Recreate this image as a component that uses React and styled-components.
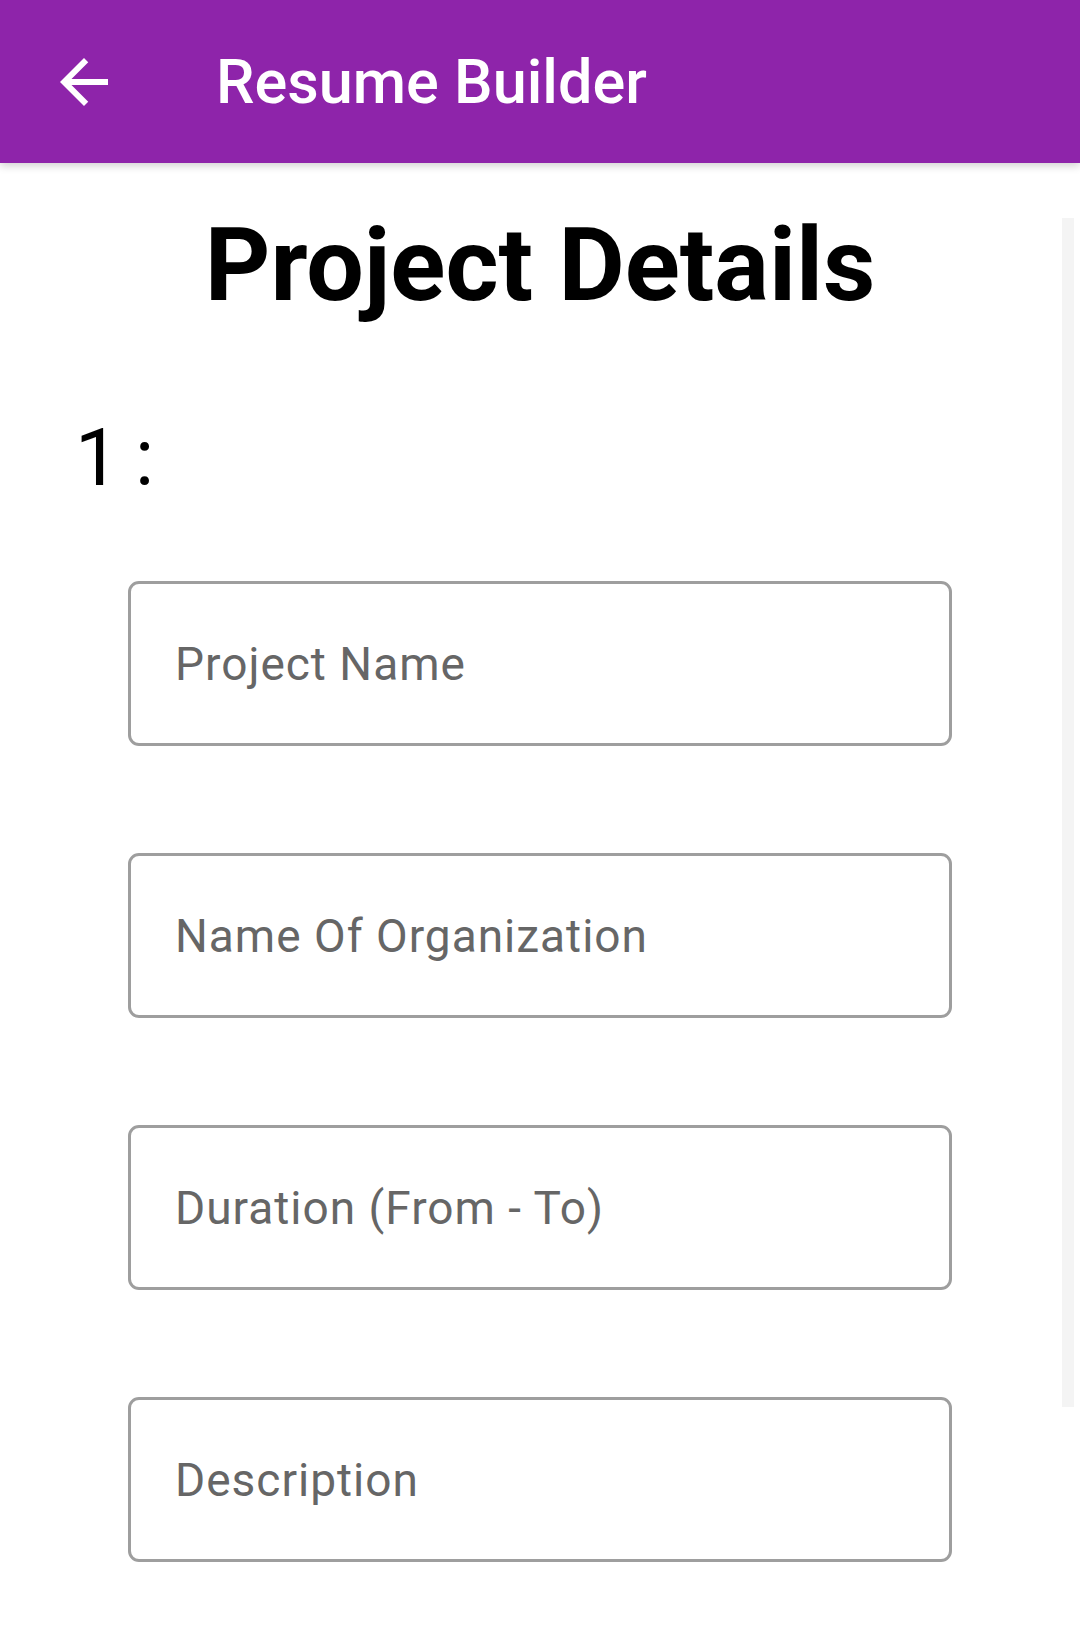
import React from "react";
import styled, { createGlobalStyle } from "styled-components";

const Global = createGlobalStyle`
  html, body { margin: 0; padding: 0; background: #ffffff; }
  body { font-family: Roboto, "Noto Sans", Arial, sans-serif; }
  * { box-sizing: border-box; }
`;

const Page = styled.div`
  width: 1080px;
  min-height: 1629px;
  background: #ffffff;
  overflow: hidden;
`;

const AppBar = styled.header`
  position: relative;
  z-index: 2;
  height: 163px;
  background: #8e24aa;
  display: flex;
  align-items: center;
  padding-left: 48px;
  box-shadow: 0 3px 8px rgba(0, 0, 0, 0.18);
`;

const BackButton = styled.div`
  width: 72px;
  height: 72px;
  display: flex;
  align-items: center;
  justify-content: center;
  color: #ffffff;
`;

const AppTitle = styled.h1`
  margin: 0 0 0 96px;
  font-family: Roboto, sans-serif;
  font-weight: 500;
  font-size: 61.2px;
  color: #ffffff;
  line-height: normal;
`;

const Content = styled.main`
  position: relative;
  display: flex;
  flex-direction: column;
  padding-top: 42px;
`;

const ScrollTrack = styled.div`
  position: absolute;
  left: 1062px;
  top: 55px;
  width: 12px;
  height: 1189px;
  background: #f4f4f4;
`;

const Heading = styled.h2`
  margin: 0;
  text-align: center;
  font-family: Roboto, sans-serif;
  font-weight: 700;
  font-size: 102px;
  line-height: normal;
  color: #000000;
`;

const Index = styled.div`
  margin: 87px 0 0 75px;
  font-family: Roboto, sans-serif;
  font-weight: 400;
  font-size: 79px;
  line-height: normal;
  word-spacing: -4px;
  color: #000000;
`;

const Fields = styled.div`
  display: flex;
  flex-direction: column;
  align-items: center;
  gap: 107px;
  margin-top: 77px;
`;

const Field = styled.div`
  width: 824px;
  height: 165px;
  border: 3px solid #9e9e9e;
  border-radius: 11px;
  display: flex;
  align-items: center;
  padding-left: 44px;
  font-family: Roboto, sans-serif;
  font-size: 46px;
  letter-spacing: 1px;
  color: #666666;
  line-height: normal;
`;

const fields = [
  "Project Name",
  "Name Of Organization",
  "Duration (From - To)",
  "Description",
];

export default function App() {
  return (
    <Page>
      <Global />
      <AppBar>
        <BackButton>
          <svg width="72" height="72" viewBox="0 0 24 24" fill="currentColor">
            <path d="M20 11H7.83l5.59-5.59L12 4l-8 8 8 8 1.41-1.41L7.83 13H20v-2z" />
          </svg>
        </BackButton>
        <AppTitle>Resume Builder</AppTitle>
      </AppBar>
      <Content>
        <ScrollTrack />
        <Heading>Project Details</Heading>
        <Index>1 :</Index>
        <Fields>
          {fields.map((f) => (
            <Field key={f}>{f}</Field>
          ))}
        </Fields>
      </Content>
    </Page>
  );
}
